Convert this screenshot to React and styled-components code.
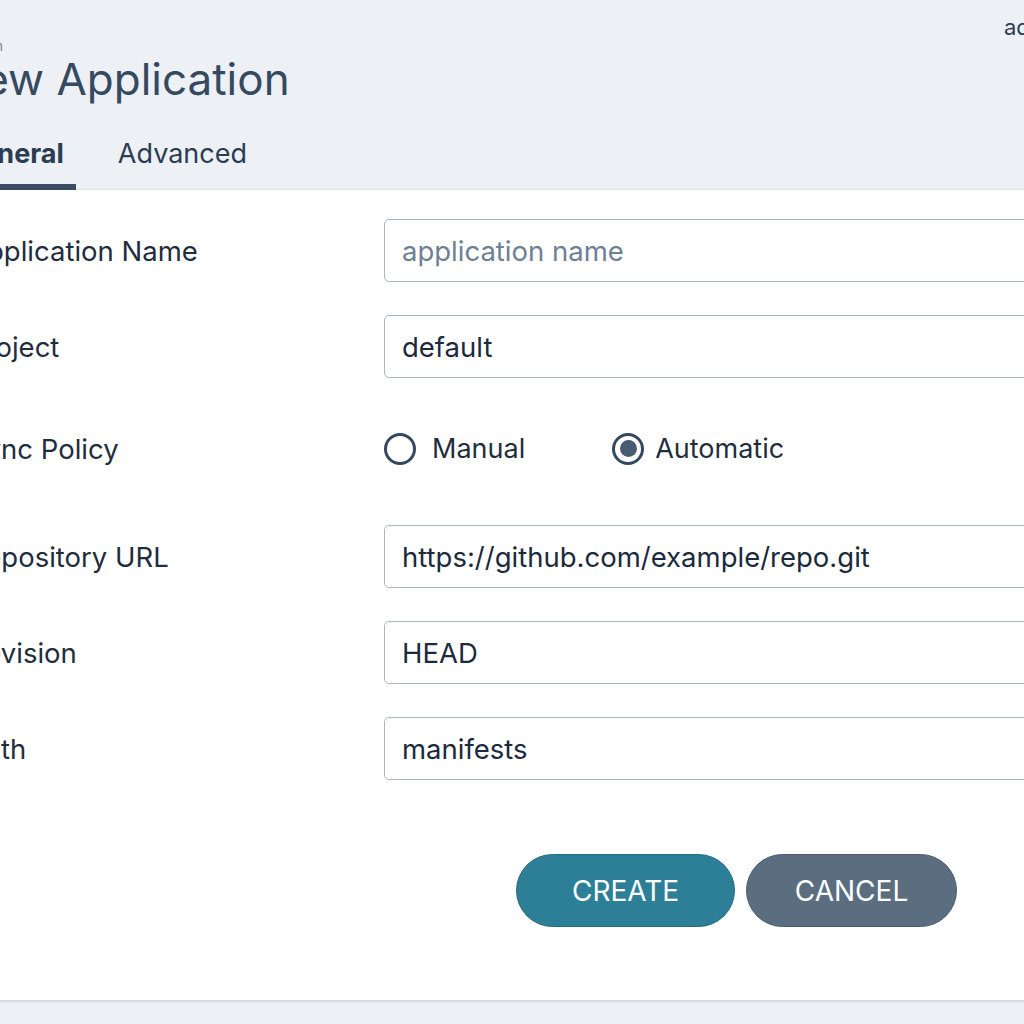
import React from "react";
import styled, { createGlobalStyle } from "styled-components";

const GlobalStyle = createGlobalStyle`
  html, body {
    margin: 0;
    padding: 0;
    background: #edf1f5;
  }
  body {
    font-family: Inter, "Noto Sans", sans-serif;
    color: #1f2d3d;
  }
`;

const Viewport = styled.div`
  width: 1024px;
  height: 1024px;
  overflow: hidden;
  background: #edf1f5;
`;

const Shell = styled.div`
  width: 1320px;
  margin-left: -32px;
`;

const Header = styled.header`
  height: 190px;
  box-sizing: border-box;
  padding-top: 14px;
  display: flex;
  flex-direction: column;
`;

const TopRow = styled.div`
  display: grid;
  grid-template-columns: 1036px auto;
  height: 32px;
`;

const Crumb = styled.div`
  font-size: 13px;
  color: #6f8196;
  margin: 24px 0 0 -34px;
  white-space: nowrap;
`;

const User = styled.div`
  font-size: 22px;
  color: #2c3e52;
`;

const Title = styled.h1`
  margin: 2px 0 0 -18px;
  font-size: 44px;
  font-weight: 400;
  color: #354a61;
  line-height: 62px;
`;

const Tabs = styled.nav`
  display: flex;
  gap: 30px;
  margin-top: auto;
  margin-left: -19px;
`;

const Tab = styled.div`
  font-size: 27px;
  font-weight: ${(p) => (p.$active ? 700 : 400)};
  color: #2a3d52;
  padding: 0 12px 14px;
  border-bottom: 6px solid ${(p) => (p.$active ? "#3a4d63" : "transparent")};
  line-height: 32px;
`;

const Panel = styled.main`
  height: 810px;
  box-sizing: border-box;
  background: #ffffff;
  padding-top: 29px;
  box-shadow: 0 1px 3px rgba(60, 80, 100, 0.25);
`;

const Form = styled.div`
  display: flex;
  flex-direction: column;
  gap: 33px;
`;

const Row = styled.div`
  display: flex;
  align-items: center;
  height: 63px;
  margin: ${(p) => p.$margin || "0"};
`;

const Label = styled.label`
  width: 416px;
  flex: none;
  font-size: 27.5px;
  color: #1f2d3d;
`;

const Input = styled.input`
  flex: 1;
  height: 63px;
  box-sizing: border-box;
  border: 1.5px solid #a9b7c5;
  border-radius: 5px;
  padding: 0 17px;
  font-family: Inter, "Noto Sans", sans-serif;
  font-size: 27.5px;
  color: #1b2a3c;
  background: #fff;
  outline: none;

  &::placeholder {
    color: #6d8096;
  }
`;

const RadioGroup = styled.div`
  display: flex;
  align-items: center;
  gap: 87px;
`;

const RadioOption = styled.label`
  display: flex;
  align-items: center;
  gap: ${(p) => p.$gap}px;
  font-size: 27px;
  color: #1f2d3d;
`;

const RadioCircle = styled.span`
  width: 32px;
  height: 32px;
  box-sizing: border-box;
  border-radius: 50%;
  border: 3px solid #34485e;
  display: flex;
  align-items: center;
  justify-content: center;

  &::after {
    content: "";
    width: 17px;
    height: 17px;
    border-radius: 50%;
    background: ${(p) => (p.$checked ? "#485b72" : "transparent")};
  }
`;

const Actions = styled.div`
  display: flex;
  gap: 11px;
  margin: 74px 0 0 548px;
`;

const Button = styled.button`
  width: ${(p) => p.$width}px;
  height: 73px;
  border-radius: 37px;
  border: 1.5px solid ${(p) => p.$border};
  background: ${(p) => p.$bg};
  color: #ffffff;
  font-family: Inter, "Noto Sans", sans-serif;
  font-size: 28px;
  font-weight: 400;
  text-transform: uppercase;
  cursor: pointer;
`;

const fields = [
  { label: "Application Name", placeholder: "application name" },
  { label: "Project", value: "default" },
];

const repoFields = [
  { label: "Repository URL", value: "https://github.com/example/repo.git" },
  { label: "Revision", value: "HEAD" },
  { label: "Path", value: "manifests" },
];

const Field = ({ label, value, placeholder }) => (
  <Row>
    <Label>{label}</Label>
    <Input defaultValue={value} placeholder={placeholder} />
  </Row>
);

export default function App() {
  return (
    <Viewport>
      <GlobalStyle />
      <Shell>
        <Header>
          <TopRow>
            <Crumb>Application</Crumb>
            <User>admin</User>
          </TopRow>
          <Title>New Application</Title>
          <Tabs>
            <Tab $active>General</Tab>
            <Tab>Advanced</Tab>
          </Tabs>
        </Header>
        <Panel>
          <Form>
            {fields.map((f) => (
              <Field key={f.label} {...f} />
            ))}
            <Row $margin="6px 0 12px">
              <Label>Sync Policy</Label>
              <RadioGroup>
                <RadioOption $gap={16}>
                  <RadioCircle />
                  Manual
                </RadioOption>
                <RadioOption $gap={11}>
                  <RadioCircle $checked />
                  Automatic
                </RadioOption>
              </RadioGroup>
            </Row>
            {repoFields.map((f) => (
              <Field key={f.label} {...f} />
            ))}
          </Form>
          <Actions>
            <Button $width={219} $bg="#2d7f97" $border="#1f6c83">
              Create
            </Button>
            <Button $width={211} $bg="#5a6e80" $border="#4a5c6c">
              Cancel
            </Button>
          </Actions>
        </Panel>
      </Shell>
    </Viewport>
  );
}
